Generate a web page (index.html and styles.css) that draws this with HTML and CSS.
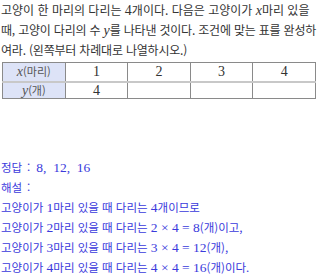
FILE: index.html
```html
<!DOCTYPE html>
<html lang="ko">
<head>
<meta charset="utf-8">
<link rel="stylesheet" href="styles.css">
</head>
<body>
<div class="page">
  <p class="question">고양이 한 마리의 다리는 <span class="m">4</span>개이다. 다음은 고양이가 <i class="m">x</i>마리 있을<br><span class="tight">때, 고양이 다리의 수 <i class="m">y</i>를 나타낸 것이다. 조건에 맞는 표를 완성하</span><br><span class="tight">여라. (왼쪽부터 차례대로 나열하시오.)</span></p>
  <table class="grid">
    <tr class="r1">
      <th><i class="m">x</i>(마리)</th>
      <td class="m">1</td><td class="m">2</td><td class="m">3</td><td class="m">4</td>
    </tr>
    <tr class="r2">
      <th><i class="m">y</i>(개)</th>
      <td class="m">4</td><td></td><td></td><td></td>
    </tr>
  </table>
  <div class="answer">
    <p>정답<span class="sp"> : </span><span class="m">8, &nbsp;12, &nbsp;16</span></p>
    <p>해설<span class="sp"> :</span></p>
    <p>고양이가 <span class="m">1</span>마리 있을 때 다리는 <span class="m">4</span>개이므로</p>
    <p>고양이가 <span class="m">2</span>마리 있을 때 다리는 <span class="m">2 × 4 = 8</span>(개)이고,</p>
    <p>고양이가 <span class="m">3</span>마리 있을 때 다리는 <span class="m">3 × 4 = 12</span>(개),</p>
    <p>고양이가 <span class="m">4</span>마리 있을 때 다리는 <span class="m">4 × 4 = 16</span>(개)이다.</p>
  </div>
</div>
</body>
</html>
```
FILE: styles.css
```css
html, body { margin: 0; padding: 0; background: #fff; }
.page {
  width: 320px;
  font-family: "Noto Sans CJK KR", sans-serif;
  font-size: 12px;
  color: #333;
}
p { margin: 0; white-space: nowrap; }
.question {
  padding-left: 1px;
  line-height: 20px;
  letter-spacing: 0;
}
.question .tight { letter-spacing: -0.2px; }
.m {
  font-family: "Liberation Serif", "DejaVu Serif", serif;
  font-size: 14px;
  line-height: 1;
  letter-spacing: 0;
}
i.m { font-style: italic; }
.grid {
  margin: 2px 0 0 2px;
  border-collapse: collapse;
  width: 314px;
  table-layout: fixed;
}
.grid th, .grid td {
  border: 1px solid #8a8a8a;
  text-align: center;
  padding: 0;
  font-weight: normal;
  color: #333;
  line-height: 1;
}
.grid th {
  background: #dde3f7;
  font-size: 11px;
  color: #555;
}
.grid .r1 th, .grid .r1 td { height: 18px; border-bottom: 2px solid #c8c8c8; }
.grid .r2 th, .grid .r2 td { height: 15px; }
.answer {
  margin-top: 58px;
  padding-left: 1px;
  color: #3a3adc;
  font-size: 11.5px;
  line-height: 20px;
}
.answer .m { font-size: 13.5px; }
.answer .sp { white-space: pre; letter-spacing: 1.5px; }
```
